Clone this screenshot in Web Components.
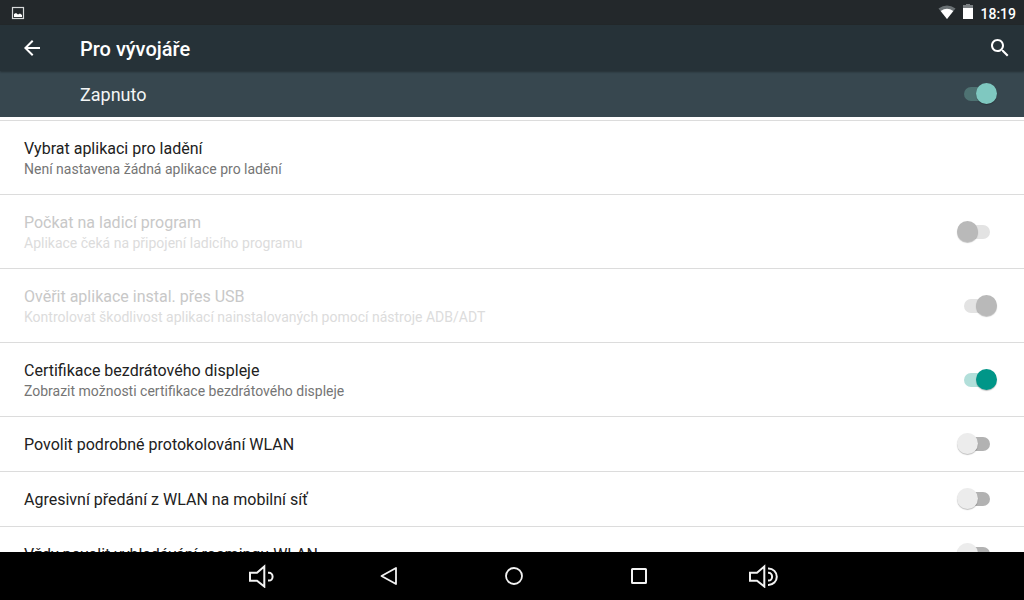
<!DOCTYPE html>
<html lang="cs">
<head>
<meta charset="utf-8">
<title>Pro vývojáře</title>
<style>
html, body { height: 100%; margin: 0; }
body { font-family: Roboto, "Noto Sans", sans-serif; color: #212121; background: #fff; }
</style>
</head>
<body>
<dev-screen></dev-screen>

<template id="t-toggle">
<style>
:host { display: block; --track: #b2b2b2; --thumb: #ececec; }
:host([checked]) { --track: #b2dfda; --thumb: #009688; }
:host([disabled]) { --track: #e3e3e3; --thumb: #b9b9b9; }
:host([tone="dark"]) { --track: #4e7272; --thumb: #7fc8c0; }
label { display: flex; align-items: center; justify-content: space-between; }
input { appearance: none; position: relative; flex: none; width: 40px; height: 22px; margin: 0 27px 0 16px; outline: none; }
input::before { content: ""; position: absolute; left: 7px; top: 4px; width: 26px; height: 14px; border-radius: 7px; background: var(--track); }
input::after { content: ""; position: absolute; left: 0; top: 0; width: 21px; height: 21px; border-radius: 50%; background: var(--thumb); box-shadow: 0 1px 1px rgba(0,0,0,.25); }
input:checked::after { left: 19px; }
</style>
<label><slot></slot><input type="checkbox" role="switch"></label>
</template>

<template id="t-row">
<style>
:host { display: block; flex: none; border-top: 1px solid #dcdcdc; }
:host([disabled]) { --title: #c8c8c8; --summary: #dcdcdc; }
.text { display: block; box-sizing: border-box; min-height: 54px; padding: 18px 0 15px 24px; }
.title { display: block; font-size: 16px; line-height: 20px; color: var(--title, #212121); }
.summary { display: block; font-size: 14px; line-height: 20px; color: var(--summary, #757575); }
</style>
</template>

<template id="t-status">
<style>
:host { display: flex; align-items: center; flex: none; height: 25px; padding: 0 8px 0 11px; background: #23282b; color: #fff; }
svg { display: block; flex: none; }
.wifi { margin-left: auto; }
.battery { margin: 0 7px; }
time { padding-top: 2px; font-size: 14px; font-weight: 500; line-height: 20px; }
</style>
<svg width="14" height="14" viewBox="0 0 14 14"><rect x="1.5" y="1.5" width="11" height="11" fill="none" stroke="#d8dadb" stroke-width="1.2"/><path d="M3 11V8l2-1 2 1.500 2-1 2 1.500V11z" fill="#fff"/></svg>
<svg class="wifi" width="18" height="17" viewBox="0 0 18 17"><path d="M.5 4.500Q9-1.500 17.500 4.500L9 15z" fill="#697073"/><path d="M2.700 7Q9 2.500 15.300 7L9 15z" fill="#fff"/></svg>
<svg class="battery" width="10" height="17" viewBox="0 0 10 17"><path d="M0 1h3V0h4v1h3v4H0z" fill="#7b8083"/><path d="M0 4h10v11H0z" fill="#fff"/></svg>
<time>18:19</time>
</template>

<template id="t-appbar">
<style>
:host { display: flex; align-items: center; flex: none; height: 46px; padding: 0 12px 0 20px; background: #263238; color: #fff; position: relative; box-shadow: 0 1px 2px rgba(0,0,0,.35); }
button { border: 0; padding: 0; background: none; color: inherit; width: 24px; height: 24px; }
svg { display: block; fill: currentColor; }
h1 { flex: 1; margin: 0 0 0 36px; padding-top: 2px; font-size: 20px; font-weight: 500; line-height: 24px; }
</style>
<button aria-label="Zpět"><svg width="24" height="24" viewBox="0 0 24 24"><path d="M20 11H7.830l5.590-5.590L12 4l-8 8 8 8 1.410-1.410L7.830 13H20v-2z"/></svg></button>
<h1><slot></slot></h1>
<button aria-label="Hledat"><svg width="24" height="24" viewBox="0 0 24 24"><path d="M15.500 14h-.79l-.28-.27C15.410 12.590 16 11.110 16 9.500 16 5.910 13.090 3 9.500 3S3 5.910 3 9.500 5.910 16 9.500 16c1.610 0 3.090-.59 4.230-1.570l.27.28v.79l5 4.990L20.490 19l-4.990-5zm-6 0C7.010 14 5 11.990 5 9.500S7.010 5 9.500 5 14 7.010 14 9.500 11.990 14 9.500 14z"/></svg></button>
</template>

<template id="t-nav">
<style>
:host { display: flex; justify-content: center; flex: none; height: 48px; padding-left: 3px; background: #000; }
button { display: flex; align-items: center; justify-content: center; flex: 0 1 125px; border: 0; padding: 0; background: none; }
svg { display: block; fill: none; stroke: #f2f2f2; stroke-width: 2; }
</style>
<button aria-label="Ztlumit"><svg width="32" height="24" viewBox="0 -1 32 24"><path d="M2 7.700h7L16.300 1.500v20L9 15.700H2z"/><path d="M20 7.800h1a3.600 3.900 0 0 1 0 7.800h-1"/></svg></button>
<button aria-label="Zpět"><svg width="24" height="24" viewBox="0 0 24 24"><path d="M19 4v16L4.500 12z" stroke-width="1.800" stroke-linejoin="round"/></svg></button>
<button aria-label="Domů"><svg width="24" height="24" viewBox="0 0 24 24"><circle cx="12" cy="12" r="8" stroke-width="1.800"/></svg></button>
<button aria-label="Přehled"><svg width="24" height="24" viewBox="0 0 24 24"><rect x="5" y="5" width="14" height="14" rx="0.500"/></svg></button>
<button aria-label="Zesílit"><svg width="32" height="24" viewBox="0 -1 32 24"><path d="M2 7.700h7L16.300 1.500v20L9 15.700H2z"/><path d="M20 7.800h.5a3.600 3.900 0 0 1 0 7.800h-.5M20 3.400h.5a8.300 8.300 0 0 1 0 16.600h-.5"/></svg></button>
</template>

<template id="t-screen">
<style>
:host { display: flex; flex-direction: column; height: 100vh; }
.master { flex: none; background: #37474f; color: #f3f5f5; }
.master span { padding: 13px 0 11px 80px; font-size: 18px; line-height: 22px; }
main { display: flex; flex-direction: column; flex: 1; min-height: 0; overflow: hidden; padding-top: 3px; background: #fff; }
</style>
<status-bar></status-bar>
<app-bar>Pro vývojáře</app-bar>
<toggle-line class="master" tone="dark" checked><span>Zapnuto</span></toggle-line>
<main>
<setting-row heading="Vybrat aplikaci pro ladění" summary="Není nastavena žádná aplikace pro ladění"></setting-row>
<setting-row toggle disabled heading="Počkat na ladicí program" summary="Aplikace čeká na připojení ladicího programu"></setting-row>
<setting-row toggle disabled checked heading="Ověřit aplikace instal. přes USB" summary="Kontrolovat škodlivost aplikací nainstalovaných pomocí nástroje ADB/ADT"></setting-row>
<setting-row toggle checked heading="Certifikace bezdrátového displeje" summary="Zobrazit možnosti certifikace bezdrátového displeje"></setting-row>
<setting-row toggle heading="Povolit podrobné protokolování WLAN"></setting-row>
<setting-row toggle heading="Agresivní předání z WLAN na mobilní síť"></setting-row>
<setting-row toggle heading="Vždy povolit vyhledávání roamingu WLAN"></setting-row>
</main>
<nav-bar></nav-bar>
</template>

<script>
class Base extends HTMLElement {
  constructor() {
    super();
    this.attachShadow({ mode: "open" }).append(
      document.getElementById(this.constructor.template).content.cloneNode(true));
  }
}
class ToggleLine extends Base {
  static template = "t-toggle";
  connectedCallback() {
    const input = this.shadowRoot.querySelector("input");
    input.checked = this.hasAttribute("checked");
    input.disabled = this.hasAttribute("disabled");
    input.onchange = () => this.toggleAttribute("checked", input.checked);
  }
}
class SettingRow extends Base {
  static template = "t-row";
  connectedCallback() {
    if (this.shadowRoot.querySelector(".text")) return;
    const text = document.createElement("span");
    text.className = "text";
    for (const [attr, cls] of [["heading", "title"], ["summary", "summary"]]) {
      if (!this.hasAttribute(attr)) continue;
      const part = document.createElement("span");
      part.className = cls;
      part.textContent = this.getAttribute(attr);
      text.append(part);
    }
    if (this.hasAttribute("toggle")) {
      const line = document.createElement("toggle-line");
      for (const a of ["checked", "disabled"]) line.toggleAttribute(a, this.hasAttribute(a));
      line.append(text);
      this.shadowRoot.append(line);
    } else {
      this.shadowRoot.append(text);
    }
  }
}
class StatusBar extends Base { static template = "t-status"; }
class AppBar extends Base { static template = "t-appbar"; }
class NavBar extends Base { static template = "t-nav"; }
class DevScreen extends Base { static template = "t-screen"; }
customElements.define("toggle-line", ToggleLine);
customElements.define("setting-row", SettingRow);
customElements.define("status-bar", StatusBar);
customElements.define("app-bar", AppBar);
customElements.define("nav-bar", NavBar);
customElements.define("dev-screen", DevScreen);
</script>
</body>
</html>
